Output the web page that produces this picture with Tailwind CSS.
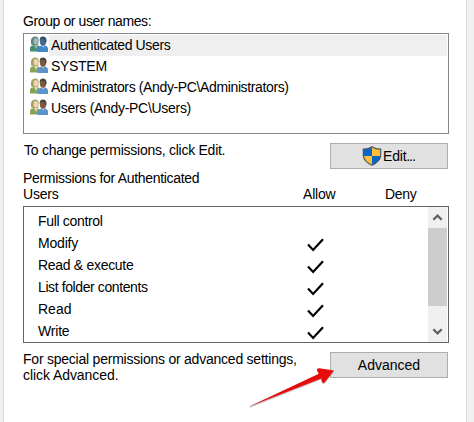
<!DOCTYPE html>
<html lang="en">
<head>
<meta charset="utf-8">
<title>Permissions</title>
<script src="https://cdn.jsdelivr.net/npm/@tailwindcss/browser@4"></script>
</head>
<body class="w-[474px] h-[422px] overflow-hidden bg-[#f0f0f0] px-[3px] pr-[7px] font-['Liberation_Sans',Arial,sans-serif] text-[14px] leading-[16px] text-black">
<svg class="hidden">
  <defs>
    <g id="people">
      <path d="M0 15.5V12.5Q0 9.8 3 9.2L6 8.8 9.5 10V15.5Z" fill="var(--shirt)"/>
      <path d="M1.2 8.5Q.3 5 1.5 2.6 3 .1 6 .5 8.8 1 8.6 4.5L8.3 8.5 5 9.5Z" fill="var(--hair)"/>
      <ellipse cx="5.8" cy="5.2" rx="2.2" ry="3.2" fill="var(--skin)"/>
      <path d="M4 9L6.2 13 7.8 9.2Z" fill="var(--skin)"/>
      <path d="M7.5 16V12.8Q8 10.2 11 9.8L15 9.6Q18 10.4 18 13V16Z" fill="var(--coat)"/>
      <path d="M11.4 9.3L13.2 11.4 15.1 9.3Z" fill="#c3d4e2"/>
      <ellipse cx="13" cy="5.5" rx="3.1" ry="4.2" fill="var(--face)"/>
      <path d="M9.7 5Q9.2 .6 13.2 .6 17 .8 16.5 5.7L15.3 7 14.8 3.6 11 3Z" fill="var(--dark)"/>
    </g>
    <path id="tick" d="M1 6.6L6.1 12 16 1.2" fill="none" stroke="#000" stroke-width="2.2"/>
  </defs>
</svg>
<main class="h-[422px] border-x border-[#d9d9d9] bg-white pl-[19px] pt-[13px]">
  <div class="w-[426px]">
    <div class="h-[20px] whitespace-nowrap tracking-[-0.4px]">Group or user names:</div>
    <div class="h-[101px] border border-[#828790] p-px">
      <div class="flex h-[21px]">
        <svg class="ml-[5px] mt-px mr-px h-[16px] w-[18px] shrink-0 [--coat:#4189cb] [--dark:#34506c] [--face:#44698c] [--hair:#60827c] [--shirt:#42916e] [--skin:#a5b9bd]" viewBox="0 0 18 16"><use href="#people"/></svg>
        <div class="grow bg-[#efefef] pl-[2px] pt-[2px] whitespace-nowrap tracking-[-0.35px]">Authenticated Users</div>
      </div>
      <div class="flex h-[21px]">
        <svg class="ml-[5px] mt-px mr-px h-[16px] w-[18px] shrink-0 [--coat:#5d93cb] [--dark:#4a443f] [--face:#81583f] [--hair:#a3a262] [--shirt:#82a655] [--skin:#efd5b4]" viewBox="0 0 18 16"><use href="#people"/></svg>
        <div class="grow pl-[2px] pt-[2px] whitespace-nowrap tracking-[-0.3px]">SYSTEM</div>
      </div>
      <div class="flex h-[21px]">
        <svg class="ml-[5px] mt-px mr-px h-[16px] w-[18px] shrink-0 [--coat:#5d93cb] [--dark:#4a443f] [--face:#81583f] [--hair:#a3a262] [--shirt:#82a655] [--skin:#efd5b4]" viewBox="0 0 18 16"><use href="#people"/></svg>
        <div class="grow pl-[2px] pt-[2px] whitespace-nowrap tracking-[-0.37px]">Administrators (Andy-PC\Administrators)</div>
      </div>
      <div class="flex h-[21px]">
        <svg class="ml-[5px] mt-px mr-px h-[16px] w-[18px] shrink-0 [--coat:#5d93cb] [--dark:#4a443f] [--face:#81583f] [--hair:#a3a262] [--shirt:#82a655] [--skin:#efd5b4]" viewBox="0 0 18 16"><use href="#people"/></svg>
        <div class="grow pl-[2px] pt-[2px] whitespace-nowrap tracking-[-0.3px]">Users (Andy-PC\Users)</div>
      </div>
    </div>
    <div class="flex h-[36px] justify-between pr-px pt-[8px]">
      <div class="pl-px whitespace-nowrap tracking-[-0.26px]">To change permissions, click Edit.</div>
      <button class="mt-px flex h-[26px] w-[118px] border border-[#adadad] bg-[#e1e1e1] pl-[31px]">
        <svg class="mt-[2px] h-[20px] w-[20px] shrink-0" viewBox="0 0 20 20">
          <path d="M10 .8Q6 3.4 1.3 3.2V9.5Q2 15.8 10 19.2 18 15.8 18.7 9.5V3.2Q14 3.4 10 .8Z" fill="#ffbd38"/>
          <path d="M10 .8Q6 3.4 1.3 3.2V10H10ZM10 10V19.2Q17.8 16 18.7 10Z" fill="#0667c8"/>
          <path d="M10 .8Q6 3.4 1.3 3.2V9.5Q2 15.8 10 19.2 18 15.8 18.7 9.5V3.2Q14 3.4 10 .8Z" fill="none" stroke="#4e565e" stroke-width="1.2"/>
        </svg>
        <span class="pl-px pt-[4px] tracking-[-0.2px]">Edit<span class="tracking-[-1.1px]">...</span></span>
      </button>
    </div>
    <div class="flex h-[36px]">
      <div class="w-[280px] tracking-[-0.31px]">Permissions for Authenticated<br><span class="tracking-[-0.2px]">Users</span></div>
      <div class="w-[82px] pt-[16px] tracking-[-0.2px]">Allow</div>
      <div class="pt-[16px] tracking-[-0.3px]">Deny</div>
    </div>
    <div class="flex h-[137px] justify-between overflow-hidden border border-[#646464] pr-px">
      <div class="w-[300px] pl-[14px] pt-[6px]">
        <div class="h-[22px] tracking-[-0.33px]">Full control</div>
        <div class="flex h-[22px] justify-between"><span class="tracking-[-0.2px]">Modify</span><svg class="mt-[3px] h-[14px] w-[17px]" viewBox="0 0 17 14"><use href="#tick"/></svg></div>
        <div class="flex h-[22px] justify-between"><span class="tracking-[-0.3px]">Read &amp; execute</span><svg class="mt-[3px] h-[14px] w-[17px]" viewBox="0 0 17 14"><use href="#tick"/></svg></div>
        <div class="flex h-[22px] justify-between"><span class="tracking-[-0.4px]">List folder contents</span><svg class="mt-[3px] h-[14px] w-[17px]" viewBox="0 0 17 14"><use href="#tick"/></svg></div>
        <div class="flex h-[22px] justify-between"><span>Read</span><svg class="mt-[3px] h-[14px] w-[17px]" viewBox="0 0 17 14"><use href="#tick"/></svg></div>
        <div class="flex h-[22px] justify-between"><span class="tracking-[-0.2px]">Write</span><svg class="mt-[3px] h-[14px] w-[17px]" viewBox="0 0 17 14"><use href="#tick"/></svg></div>
      </div>
      <div class="flex w-[19px] flex-col bg-[#f0f0f0]">
        <svg class="h-[21px] w-[19px]" viewBox="0 0 19 21"><path d="M5.3 12.8L9.5 8.6 13.7 12.8" fill="none" stroke="#606060" stroke-width="2.2"/></svg>
        <div class="h-[78px] bg-[#cdcdcd]"></div>
        <svg class="mt-[14px] h-[21px] w-[19px]" viewBox="0 0 19 21"><path d="M5.3 9.2L9.5 13.4 13.7 9.2" fill="none" stroke="#606060" stroke-width="2.2"/></svg>
      </div>
    </div>
    <div class="flex justify-between pr-px pt-[8px]">
      <div class="whitespace-nowrap"><span class="tracking-[-0.23px]">For special permissions or advanced settings,</span><br><span class="tracking-[-0.07px]">click Advanced.</span></div>
      <button class="mt-px h-[26px] w-[118px] border border-[#adadad] bg-[#e1e1e1]">Advanced</button>
    </div>
  </div>
</main>
<svg class="absolute left-[244px] top-[362px] h-[50px] w-[96px]" viewBox="244 362 96 50">
  <path d="M249.5 407Q248.5 405.8 251 404.6L318.5 373.5 317.3 370.8Q316.8 368 320 368.2L334 370.6 325 382.3Q322.6 384.6 321.6 381.5L321 378.8 249.5 407Z" fill="#777" opacity=".45" transform="translate(.3 .7)"/>
  <path d="M249.5 406.5L318.8 373.7 317 370.5Q316.5 368 319.5 368.2L334 370.4 325 382Q322.6 384 321.8 381.5L321.3 378.6Z" fill="#e60c0c"/>
</svg>
</body>
</html>
